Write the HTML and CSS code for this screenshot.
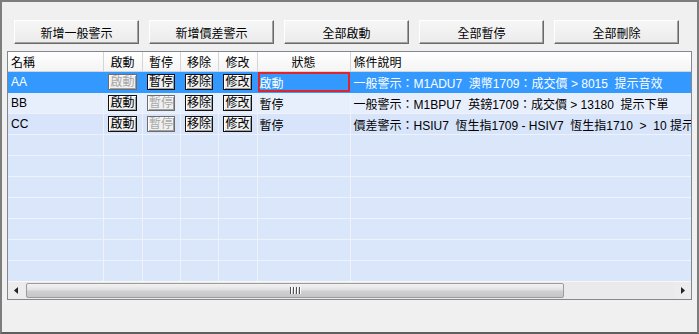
FILE: index.html
```html
<!DOCTYPE html>
<html lang="zh-Hant">
<head>
  <meta charset="UTF-8" />
  <title>警示設定</title>
  <link rel="stylesheet" href="styles.css">
</head>
<body>

  <div class="window">
    <div class="toolbar">
      <button class="tool-btn">新增一般警示</button>
      <button class="tool-btn">新增價差警示</button>
      <button class="tool-btn">全部啟動</button>
      <button class="tool-btn">全部暫停</button>
      <button class="tool-btn">全部刪除</button>
    </div>

    <div class="list">
      <div class="list-body">
        <table class="grid">
          <colgroup>
            <col class="c-name"><col class="c-act"><col class="c-act2"><col class="c-act2"><col class="c-act"><col class="c-state"><col class="c-desc">
          </colgroup>
          <thead>
            <tr>
              <th class="left">名稱</th>
              <th>啟動</th>
              <th>暫停</th>
              <th>移除</th>
              <th>修改</th>
              <th>狀態</th>
              <th class="left">條件說明</th>
            </tr>
          </thead>
          <tbody>
            <tr class="selected">
              <td class="name">AA</td>
              <td class="center"><span class="cell-btn off">啟動</span></td>
              <td class="center"><span class="cell-btn">暫停</span></td>
              <td class="center"><span class="cell-btn">移除</span></td>
              <td class="center"><span class="cell-btn">修改</span></td>
              <td class="state focused">啟動</td>
              <td class="desc">一般警示：M1ADU7&nbsp; 澳幣1709：成交價 &gt; 8015&nbsp; 提示音效</td>
            </tr>
            <tr class="light">
              <td class="name">BB</td>
              <td class="center"><span class="cell-btn">啟動</span></td>
              <td class="center"><span class="cell-btn off">暫停</span></td>
              <td class="center"><span class="cell-btn">移除</span></td>
              <td class="center"><span class="cell-btn">修改</span></td>
              <td class="state">暫停</td>
              <td class="desc">一般警示：M1BPU7&nbsp; 英鎊1709：成交價 &gt; 13180&nbsp; 提示下單</td>
            </tr>
            <tr>
              <td class="name">CC</td>
              <td class="center"><span class="cell-btn">啟動</span></td>
              <td class="center"><span class="cell-btn off">暫停</span></td>
              <td class="center"><span class="cell-btn">移除</span></td>
              <td class="center"><span class="cell-btn">修改</span></td>
              <td class="state">暫停</td>
              <td class="desc">價差警示：HSIU7&nbsp; 恆生指1709 - HSIV7&nbsp; 恆生指1710&nbsp; &gt;&nbsp; 10 提示音效</td>
            </tr>
            <tr class="empty"><td></td><td></td><td></td><td></td><td></td><td></td><td></td></tr>
            <tr class="empty"><td></td><td></td><td></td><td></td><td></td><td></td><td></td></tr>
            <tr class="empty"><td></td><td></td><td></td><td></td><td></td><td></td><td></td></tr>
            <tr class="empty"><td></td><td></td><td></td><td></td><td></td><td></td><td></td></tr>
            <tr class="empty"><td></td><td></td><td></td><td></td><td></td><td></td><td></td></tr>
            <tr class="empty"><td></td><td></td><td></td><td></td><td></td><td></td><td></td></tr>
            <tr class="empty"><td></td><td></td><td></td><td></td><td></td><td></td><td></td></tr>
          </tbody>
        </table>
      </div>

      <div class="hscroll">
        <div class="sb-btn">
          <svg width="5" height="7" viewBox="0 0 5 7"><path d="M4 0 L0 3.5 L4 7 Z" fill="#222"/></svg>
        </div>
        <div class="sb-track">
          <div class="sb-thumb">
            <span class="grip"></span><span class="grip"></span><span class="grip"></span><span class="grip"></span>
          </div>
        </div>
        <div class="sb-btn">
          <svg width="5" height="7" viewBox="0 0 5 7"><path d="M1 0 L5 3.5 L1 7 Z" fill="#222"/></svg>
        </div>
      </div>
    </div>
  </div>

</body>
</html>
```

FILE: styles.css
```css
html, body {
  margin: 0;
  padding: 0;
}

body {
  font-family: "Liberation Sans", "Noto Sans CJK TC", sans-serif;
  font-size: 12px;
  color: #000;
  background: #f0f0f0;
}

.window {
  width: 699px;
  height: 334px;
  box-sizing: border-box;
  border: 2px solid #7d7d7d;
  border-bottom-color: #5f5f5f;
  background: #f0f0f0;
  overflow: hidden;
}

.toolbar {
  display: flex;
  gap: 10px;
  padding: 18px 0 0 12px;
}

.tool-btn {
  width: 125px;
  height: 24px;
  padding: 0;
  font-family: inherit;
  font-size: 12px;
  color: #000;
  background: linear-gradient(#f6f6f6, #ebebeb);
  border: 1px solid;
  border-color: #ffffff #6a6a6a #6a6a6a #ffffff;
  box-shadow: inset -1px -1px 0 #a0a0a0;
}

.list {
  margin: 7px 5px 0 5px;
  border: 1px solid #828790;
  background: #dae6fa;
}

.list-body {
  height: 229px;
  overflow: hidden;
}

.grid {
  width: 802px;
  table-layout: fixed;
  border-collapse: collapse;
}

.c-name { width: 95px; }
.c-act { width: 39px; }
.c-act2 { width: 38px; }
.c-state { width: 93px; }
.c-desc { width: 460px; }

.grid th {
  height: 19px;
  padding: 0;
  font-weight: normal;
  text-align: center;
  background: linear-gradient(#ffffff, #f4f4f4);
  border-right: 1px solid #d5d5d5;
  border-bottom: 1px solid #d5d5d5;
  white-space: nowrap;
}

.grid th.left {
  text-align: left;
  padding-left: 3px;
}

.grid td {
  height: 21px;
  padding: 0;
  box-sizing: border-box;
  border-right: 1px solid #edf2fc;
  border-bottom: 1px solid #edf2fc;
  white-space: nowrap;
  overflow: hidden;
}

.grid tbody tr {
  background: #d7e4fa;
}

.grid tr.light {
  background: #e8effc;
}

.grid tr.empty {
  background: #dae6fa;
}

.grid tr.selected {
  background: #3399ff;
  color: #fff;
}

.grid tr.selected td {
  border-color: #3399ff;
}

.name {
  padding-left: 3px !important;
}

.center {
  text-align: center;
}

.state {
  padding-left: 2px !important;
}

.state.focused {
  box-shadow: inset 0 0 0 2px #e0242c;
}

.desc {
  padding-left: 3px !important;
}

.cell-btn {
  display: inline-block;
  height: 14px;
  line-height: 14px;
  padding: 0 1px;
  color: #000;
  background: #f0f0f0;
  border: 1px solid #111;
  box-shadow: inset 1px 1px 0 #fff, inset -1px -1px 0 #a0a0a0;
  vertical-align: middle;
}

.cell-btn.off {
  color: #a8a8a8;
  border-color: #6d6d6d;
}

.hscroll {
  display: flex;
  height: 17px;
  background: #eaeaea;
  border-top: 1px solid #f8f8f8;
}

.sb-btn {
  width: 17px;
  display: flex;
  align-items: center;
  justify-content: center;
  background: #ececec;
}

.sb-track {
  flex: 1;
  padding: 1px 0 1px 1px;
}

.sb-thumb {
  width: 538px;
  height: 15px;
  box-sizing: border-box;
  display: flex;
  justify-content: center;
  align-items: center;
  gap: 1px;
  border: 1px solid #9c9c9c;
  border-radius: 2px;
  background: linear-gradient(#f3f3f3, #e2e2e2 45%, #cfcfcf 55%, #c6c6c6);
}

.grip {
  width: 1px;
  height: 7px;
  background: #505050;
  box-shadow: 1px 0 0 #ffffff;
  margin-right: 1px;
}
```
